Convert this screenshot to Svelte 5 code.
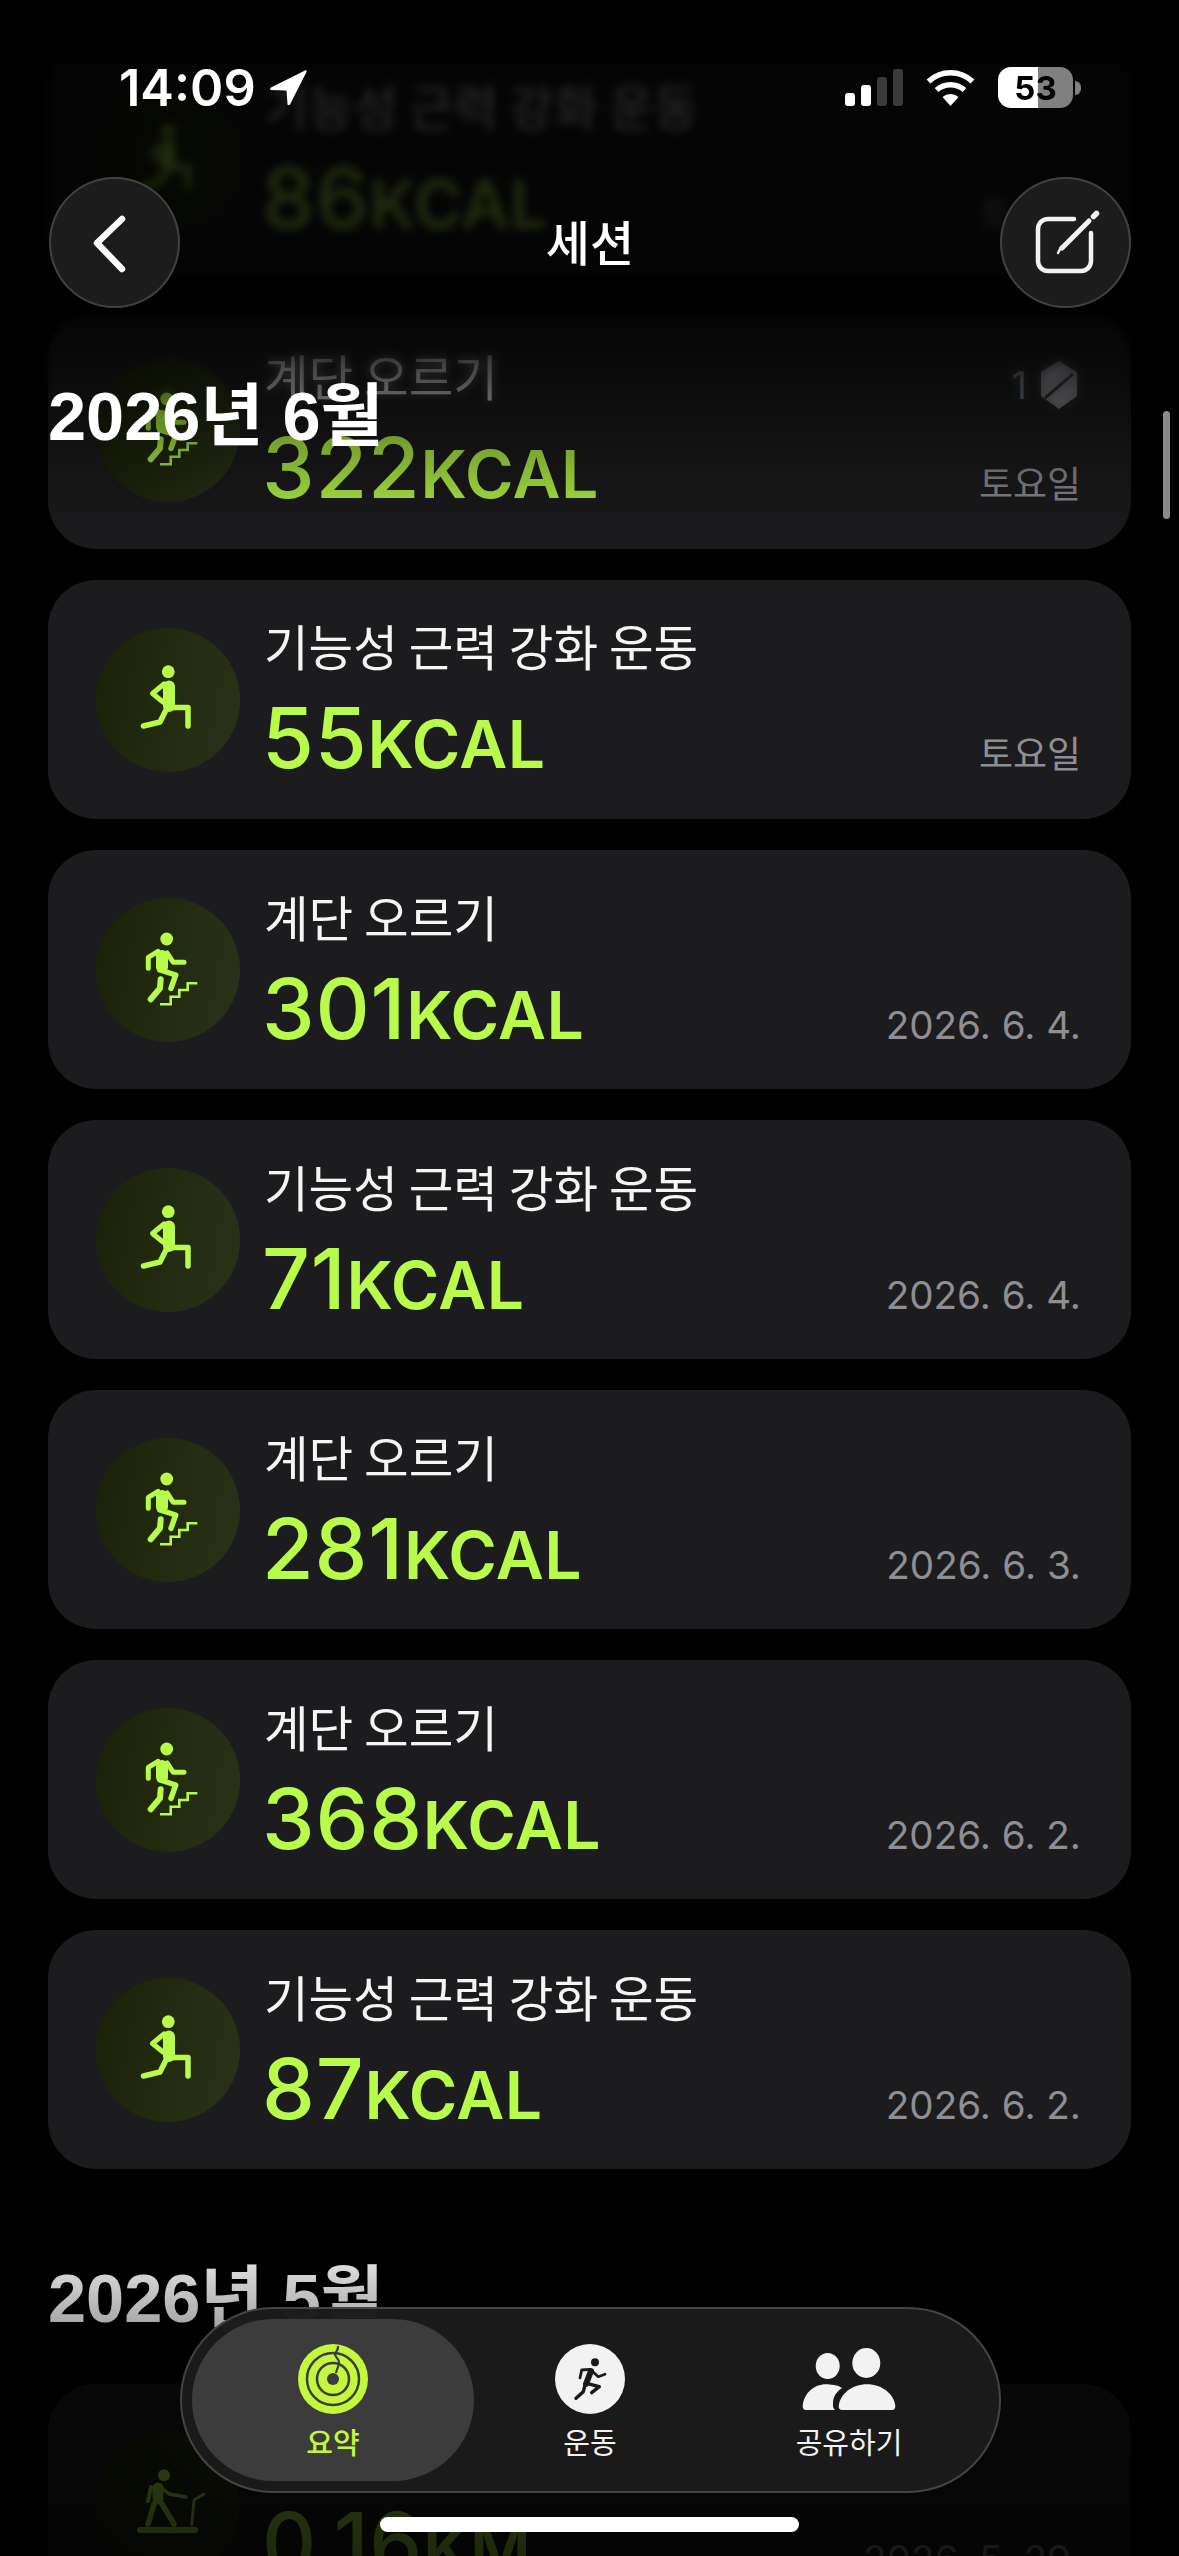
<script lang="ts">
  const sessions = [
    { title: '기능성 근력 강화 운동', value: '86', unit: 'KCAL', date: '토요일', icon: 'lunge' },
    { title: '계단 오르기', value: '322', unit: 'KCAL', date: '토요일', icon: 'stairs', medal: true },
    { title: '기능성 근력 강화 운동', value: '55', unit: 'KCAL', date: '토요일', icon: 'lunge' },
    { title: '계단 오르기', value: '301', unit: 'KCAL', date: '2026. 6. 4.', icon: 'stairs' },
    { title: '기능성 근력 강화 운동', value: '71', unit: 'KCAL', date: '2026. 6. 4.', icon: 'lunge' },
    { title: '계단 오르기', value: '281', unit: 'KCAL', date: '2026. 6. 3.', icon: 'stairs' },
    { title: '계단 오르기', value: '368', unit: 'KCAL', date: '2026. 6. 2.', icon: 'stairs' },
    { title: '기능성 근력 강화 운동', value: '87', unit: 'KCAL', date: '2026. 6. 2.', icon: 'lunge' }
  ]
  const may = [
    { title: '실내 걷기', value: '0.16', unit: 'KM', date: '2026. 5. 29.', icon: 'treadmill' }
  ]
</script>

{#snippet card(s)}
  <div class="card">
    <div class="badge">
      <svg viewBox="0 0 144 144" width="144" height="144" fill="none" stroke="#b8fb4a" stroke-linecap="round" stroke-linejoin="round">
        {#if s.icon === 'lunge'}
          <circle cx="72.3" cy="43.7" r="6.4" fill="#b8fb4a" stroke="none" />
          <path d="M73 58.5V78" stroke-width="12" />
          <path d="M68 56L56.5 65.5L67 74" stroke-width="5" />
          <path d="M71 80L64 94L47.5 98" stroke-width="5.5" />
          <path d="M74 79.5L92 79.5V98" stroke-width="5.5" />
        {:else if s.icon === 'stairs'}
          <circle cx="70.7" cy="41" r="6.4" fill="#b8fb4a" stroke="none" />
          <path d="M66 58V69" stroke-width="12" />
          <path d="M62 53.5L52.3 59.3V70.3" stroke-width="5" />
          <path d="M71 55L77.3 64.3H88" stroke-width="5" />
          <path d="M64 72L79.7 77L75 90.3" stroke-width="5.5" />
          <path d="M64.7 81.3L64 90.3L54.7 101.3" stroke-width="6" />
          <path d="M64 106.3H74.7V98.7H83.3V92H91.7V85.3H101.3" stroke-width="2.6" stroke-linecap="butt" stroke-linejoin="miter" />
        {:else}
          <circle cx="68" cy="43.3" r="6" fill="#b8fb4a" stroke="none" />
          <path d="M62 56V67" stroke-width="11" />
          <path d="M55 55L52 69" stroke-width="4" />
          <path d="M67 57L73 62L90 65" stroke-width="3.5" />
          <path d="M58 72L52 92M66 72L78 92" stroke-width="5.5" />
          <path d="M44 98H99" stroke-width="6" />
          <path d="M95.7 93L98 68L108 62" stroke-width="2.8" />
        {/if}
      </svg>
    </div>
    <div class="body">
      <div class="title">{s.title}</div>
      <div class="stat">
        <span class="value">{s.value}<span class="unit">{s.unit}</span></span>
        <span class="date" class:ko={s.date === '토요일'}>{s.date}</span>
      </div>
    </div>
    {#if s.medal}
      <div class="medal">
        <span>1</span>
        <svg viewBox="0 0 40 50" width="40" height="50">
          <path d="M20 1L38 12V36L20 49L2 36V12Z" fill="#8e8e93" />
          <path d="M6 38L34 14" stroke="#1c1c1e" stroke-width="3" />
        </svg>
      </div>
    {/if}
  </div>
{/snippet}

<div class="screen">
  <div class="list">
    {#each sessions as s}
      {@render card(s)}
    {/each}
    <h2 class="month">2026년 5월</h2>
    {#each may as s}
      {@render card(s)}
    {/each}
  </div>

  <div class="blur-top"></div>
  <div class="fade-top"></div>
  <div class="fade-bottom"></div>

  <div class="scrollbar"></div>

  <header class="top">
    <div class="status">
      <div class="clock">
        <span>14:09</span>
        <svg viewBox="0 0 38 37" width="38" height="37">
          <path d="M36 1.5L2 18.5C0.5 19.500 1 21 2.5 21L17.500 21.500L18.500 35C18.500 36.500 20.500 36.500 21 35.500L37.500 3C38 1.500 37 1 36 1.500Z" fill="#fff" />
        </svg>
      </div>
      <div class="indicators">
        <svg viewBox="0 0 58 37" width="58" height="37">
          <rect x="0" y="24" width="10" height="13" rx="3" fill="#fff" />
          <rect x="16" y="16" width="10" height="21" rx="3" fill="#fff" />
          <rect x="32" y="8" width="10" height="29" rx="3" fill="#3a3a3c" />
          <rect x="48" y="0" width="10" height="37" rx="3" fill="#3a3a3c" />
        </svg>
        <svg class="wifi" viewBox="0 0 49 37" width="49" height="37" fill="none" stroke="#fff">
          <path d="M2.500 12.500A32 32 0 0 1 46.500 12.500" stroke-width="5.500" />
          <path d="M10.500 21A21 21 0 0 1 38.500 21" stroke-width="5.500" />
          <path d="M16.500 28A12 12 0 0 1 32.500 28L24.500 37Z" fill="#fff" stroke="none" />
        </svg>
        <div class="battery"><span>53</span></div>
        <div class="battery-tip"></div>
      </div>
    </div>
    <div class="nav">
      <button class="round" aria-label="뒤로">
        <svg viewBox="0 0 131 131" width="131" height="131" fill="none" stroke="#fff" stroke-width="6.500" stroke-linecap="round" stroke-linejoin="round">
          <path d="M73 42L48 66L73 92" />
        </svg>
      </button>
      <div class="nav-title">세션</div>
      <button class="round" aria-label="편집">
        <svg viewBox="0 0 131 131" width="131" height="131" fill="none" stroke="#f2f2f2" stroke-linecap="round">
          <path d="M74 42H48A10 10 0 0 0 38 52V84A10 10 0 0 0 48 94H81A10 10 0 0 0 91 84V56" stroke-width="4.500" />
          <path d="M62 71L89 44" stroke-width="5" />
          <path d="M58 76L61 70" stroke-width="2.500" />
          <path d="M93.500 39.500L96.500 36.500" stroke-width="5.500" />
        </svg>
      </button>
    </div>
    <h2 class="month sticky">2026년 6월</h2>
  </header>

  <nav class="tabbar">
    <div class="tab active">
      <svg viewBox="0 0 70 70" width="70" height="70" fill="none">
        <circle cx="35" cy="35" r="35" fill="#c4f83e" />
        <circle cx="35" cy="35" r="26" stroke="#3c3c3c" stroke-width="2.500" />
        <circle cx="35" cy="35" r="16" stroke="#3c3c3c" stroke-width="2.500" />
        <circle cx="35" cy="35" r="6" fill="#3c3c3c" />
        <path d="M40 2C41 6 37 8 37 10.500C37 13 41 14 41 19C41 22 39 24 38 29" stroke="#3c3c3c" stroke-width="2.200" />
      </svg>
      <span>요약</span>
    </div>
    <div class="tab middle">
      <svg viewBox="0 0 70 70" width="70" height="70" fill="none" stroke="#1a1a1a" stroke-linecap="round" stroke-linejoin="round">
        <circle cx="35" cy="35" r="35" fill="#f2f2f2" stroke="none" />
        <circle cx="40" cy="18.300" r="4" fill="#1a1a1a" stroke="none" />
        <path d="M36 27L31 40" stroke-width="6" />
        <path d="M35 25.300L26.700 26L25 34" stroke-width="2.800" />
        <path d="M37 27L43.300 32.700L50 30.300" stroke-width="2.800" />
        <path d="M31.700 39.300L44.300 42.700L36.700 48.700" stroke-width="3.400" />
        <path d="M30 41L28.300 47.700L21 54.300" stroke-width="3.400" />
      </svg>
      <span>운동</span>
    </div>
    <div class="tab share">
      <svg viewBox="0 0 94 64" width="94" height="64" fill="#f2f2f2">
        <ellipse cx="64.300" cy="16" rx="14" ry="15" />
        <ellipse cx="25.700" cy="19" rx="12" ry="13" />
        <path d="M40 63Q36.700 63 36.700 59C38 47 50 37.300 65 37.300C80 37.300 92 47 93.300 59Q93.300 63 90 63Z" />
        <path d="M4 63Q0.700 63 0.700 59C2 46 12 37.300 24 37.300C28 37.300 36 38 40 41C34 45 31 50 31 56C30.500 60 32 62 33 63Z" />
      </svg>
      <span>공유하기</span>
    </div>
  </nav>

  <div class="home"></div>
</div>

<style>
  :global(body) {
    background: #000;
  }

  .screen {
    position: relative;
    width: 1179px;
    height: 2556px;
    overflow: hidden;
    background: #000;
    font-family: Inter, "Noto Sans CJK KR", sans-serif;
    color: #fff;
  }

  .list {
    display: flex;
    flex-direction: column;
    gap: 31px;
    padding: 40px 48px 0;
  }

  .card {
    position: relative;
    display: flex;
    align-items: center;
    gap: 24px;
    flex: none;
    height: 239px;
    padding: 0 50px 0 48px;
    border-radius: 48px;
    background: #1c1c1e;
  }

  .badge {
    flex: none;
    width: 144px;
    height: 144px;
    border-radius: 50%;
    background: linear-gradient(100deg, #1a2106, #2a331a);
  }

  .badge svg {
    display: block;
  }

  .body {
    flex: 1;
    min-width: 0;
    padding-top: 19px;
  }

  .title {
    font-family: "Noto Sans CJK KR", sans-serif;
    font-size: 48.5px;
    line-height: 56px;
    color: #f5f5f5;
    margin-top: -2px;
  }

  .stat {
    display: flex;
    justify-content: space-between;
    align-items: baseline;
    margin-top: 21px;
    line-height: 88px;
  }

  .value {
    margin-left: -2px;
    font-size: 84px;
    font-weight: 500;
    letter-spacing: 0.8px;
    color: #b8fb4a;
  }

  .unit {
    font-size: 66px;
    font-weight: 600;
    letter-spacing: 0.5px;
  }

  .date {
    font-size: 38.6px;
    color: #8e8e93;
  }

  .date.ko {
    font-size: 37px;
  }

  .medal {
    position: absolute;
    top: 50px;
    right: 52px;
    display: flex;
    align-items: center;
    gap: 12px;
    font-size: 38px;
    color: #8e8e93;
  }

  .month {
    margin: 0;
    font-family: "Liberation Sans", "Noto Sans CJK KR", sans-serif;
    font-size: 68.5px;
    font-weight: 700;
    line-height: 76px;
    color: #fff;
    margin-top: 61px;
    margin-bottom: 16px;
  }

  .blur-top {
    position: absolute;
    inset: 0 0 auto 0;
    height: 440px;
    backdrop-filter: blur(5px);
    mask-image: linear-gradient(#000 0, #000 300px, rgba(0, 0, 0, 0) 440px);
  }

  .fade-top {
    position: absolute;
    inset: 0 0 auto 0;
    height: 550px;
    background: linear-gradient(#000 0, #000 40px, rgba(0, 0, 0, 0.82) 80px, rgba(0, 0, 0, 0.82) 260px, rgba(0, 0, 0, 0.95) 290px, rgba(0, 0, 0, 0.7) 340px, rgba(0, 0, 0, 0) 550px);
  }

  .fade-bottom {
    position: absolute;
    inset: auto 0 0 0;
    height: 330px;
    background: linear-gradient(rgba(0, 0, 0, 0), rgba(0, 0, 0, 0.35) 100px, rgba(0, 0, 0, 0.72) 160px, rgba(0, 0, 0, 0.84) 330px);
  }

  .scrollbar {
    position: absolute;
    top: 411px;
    right: 9px;
    width: 7px;
    height: 108px;
    border-radius: 4px;
    background: #8a8a8a;
  }

  .top {
    position: absolute;
    inset: 0 0 auto 0;
  }

  .status {
    display: flex;
    justify-content: space-between;
    align-items: center;
    height: 37px;
    padding: 69px 98px 0 119px;
  }

  .clock {
    display: flex;
    align-items: center;
    gap: 13px;
    font-size: 50.5px;
    font-weight: 600;
  }

  .indicators {
    display: flex;
    align-items: center;
  }

  .wifi {
    margin: 0 23px;
  }

  .battery {
    display: flex;
    align-items: center;
    justify-content: center;
    width: 75px;
    height: 41px;
    border-radius: 13px;
    background: linear-gradient(90deg, #fff 53%, #808080 53%);
    color: #000;
    font-size: 33px;
    font-weight: 700;
  }

  .battery-tip {
    width: 6px;
    height: 14px;
    margin-left: 2px;
    border-radius: 0 7px 7px 0;
    background: #808080;
  }

  .nav {
    display: flex;
    justify-content: space-between;
    align-items: center;
    margin-top: 71px;
    padding: 0 48px 0 49px;
  }

  .round {
    width: 131px;
    height: 131px;
    padding: 0;
    border: none;
    border-radius: 50%;
    background: #1c1c1c;
    box-shadow: inset 0 0 0 2px #414141;
  }

  .round svg {
    display: block;
  }

  .nav-title {
    font-family: "Noto Sans CJK KR", sans-serif;
    font-size: 48px;
    font-weight: 500;
    margin-bottom: 6px;
  }

  .month.sticky {
    position: absolute;
    top: 379px;
    left: 48px;
    margin: 0;
  }

  .tabbar {
    position: absolute;
    left: 180px;
    top: 2307px;
    box-sizing: border-box;
    display: flex;
    width: 821px;
    height: 186px;
    padding: 10px;
    border-radius: 93px;
    background: rgba(27, 27, 27, 0.98);
    border: 2px solid #444;
  }

  .tab {
    flex: none;
    display: flex;
    flex-direction: column;
    align-items: center;
    width: 282px;
    padding-top: 25px;
    font-family: "Noto Sans CJK KR", sans-serif;
    font-size: 29px;
    color: #f2f2f2;
  }

  .tab span {
    margin-top: 7px;
    line-height: 40px;
  }

  .tab svg {
    display: block;
  }

  .tab.active {
    border-radius: 81px;
    background: #3c3c3c;
    color: #c4f83e;
    font-weight: 500;
  }

  .tab.middle {
    width: 232px;
  }

  .tab.share {
    width: 286px;
  }

  .tab.share svg {
    margin-top: 3px;
    margin-bottom: 3px;
  }

  .home {
    position: absolute;
    left: 380px;
    top: 2517px;
    width: 419px;
    height: 15px;
    border-radius: 8px;
    background: #fff;
  }
</style>
